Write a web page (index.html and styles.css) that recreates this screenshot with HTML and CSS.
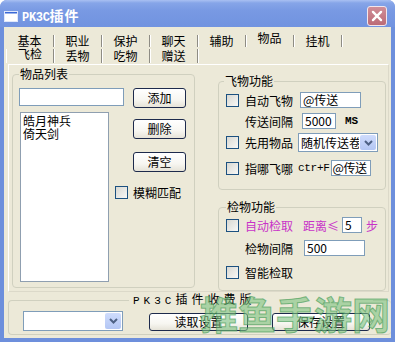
FILE: index.html
```html
<!DOCTYPE html>
<html>
<head>
    <meta charset="utf-8">
    <title>PK3C插件</title>
    <link rel="stylesheet" href="styles.css">
</head>
<body>
    <div class="window">
        <div class="titlebar">
            <svg class="app-icon" width="14" height="11" viewBox="0 0 14 11">
                <rect x="0.5" y="0.5" width="13" height="10" fill="#fff" stroke="#dfe7fb"/>
                <rect x="1" y="1" width="12" height="1.5" fill="#3a68d6"/>
            </svg>
            <span class="title"><span class="title-latin">PK3C</span>插件</span>
            <div class="btn-close">
                <svg width="20" height="20" viewBox="0 0 20 20">
                    <path d="M5.5 5.5 L14.5 14.5 M14.5 5.5 L5.5 14.5" stroke="#fff" stroke-width="2.6" stroke-linecap="round"/>
                </svg>
            </div>
        </div>

        <div class="client">
            <div class="tab-row row-back">
                <div class="tab">基本</div>
                <div class="tab">职业</div>
                <div class="tab">保护</div>
                <div class="tab">聊天</div>
                <div class="tab">辅助</div>
                <div class="tab active">物品</div>
                <div class="tab">挂机</div>
            </div>
            <div class="tab-row row-front">
                <div class="tab active">飞检</div>
                <div class="tab">丢物</div>
                <div class="tab">吃物</div>
                <div class="tab">赠送</div>
            </div>

            <div class="panel">
                <fieldset class="group group-list">
                    <legend>物品列表</legend>
                    <div class="list-top">
                        <div class="text-input item-input"></div>
                        <div class="btn btn-small">添加</div>
                    </div>
                    <div class="list-body">
                        <div class="listbox">
                            <div>皓月神兵</div>
                            <div>倚天剑</div>
                        </div>
                        <div class="list-side">
                            <div class="btn btn-small btn-first">删除</div>
                            <div class="btn btn-small btn-next">清空</div>
                            <div class="check-row">
                                <span class="check"></span>
                                <span class="check-label">模糊匹配</span>
                            </div>
                        </div>
                    </div>
                </fieldset>

                <div class="right-col">
                    <fieldset class="group group-fly">
                        <legend>飞物功能</legend>
                        <div class="row">
                            <span class="check"></span>
                            <span class="label">自动飞物</span>
                            <div class="text-input fly-target">@传送</div>
                        </div>
                        <div class="row row-gap5">
                            <span class="label indent">传送间隔</span>
                            <div class="text-input fly-interval">5000</div>
                            <span class="mono ms">MS</span>
                        </div>
                        <div class="row row-combo">
                            <span class="check"></span>
                            <span class="label">先用物品</span>
                            <div class="combo item-combo">
                                <span class="combo-text">随机传送卷</span>
                                <span class="combo-btn">
                                    <svg width="9" height="6" viewBox="0 0 9 6"><path d="M1 1 L4.5 4.5 L8 1" fill="none" stroke="#4d6185" stroke-width="2"/></svg>
                                </span>
                            </div>
                        </div>
                        <div class="row row-gap8">
                            <span class="check"></span>
                            <span class="label">指哪飞哪</span>
                            <span class="mono hotkey">ctr+F</span>
                            <div class="text-input point-target">@传送</div>
                        </div>
                    </fieldset>

                    <fieldset class="group group-pick">
                        <legend>检物功能</legend>
                        <div class="row">
                            <span class="check"></span>
                            <span class="label pink">自动检取</span>
                            <span class="pink distance">距离≤</span>
                            <div class="text-input step-input">5</div>
                            <span class="pink step">步</span>
                        </div>
                        <div class="row row-gap7">
                            <span class="label indent">检物间隔</span>
                            <div class="text-input pick-interval">500</div>
                        </div>
                        <div class="row row-gap8">
                            <span class="check"></span>
                            <span class="label">智能检取</span>
                        </div>
                    </fieldset>
                </div>
            </div>

            <fieldset class="group group-bottom">
                <legend><span class="legend-latin">PK3C</span>插件收费版</legend>
                <div class="bottom-row">
                    <div class="combo profile-combo">
                        <span class="combo-text"></span>
                        <span class="combo-btn">
                            <svg width="9" height="6" viewBox="0 0 9 6"><path d="M1 1 L4.5 4.5 L8 1" fill="none" stroke="#4d6185" stroke-width="2"/></svg>
                        </span>
                    </div>
                    <div class="btn btn-wide btn-load">读取设置</div>
                    <div class="btn btn-wide btn-save">保存设置</div>
                </div>
            </fieldset>
        </div>

        <div class="watermark">推鱼手游网</div>
    </div>
</body>
</html>
```

FILE: styles.css
```css
* {
    box-sizing: border-box;
}

body {
    margin: 0;
    background-color: #fff;
    font-family: "Noto Sans CJK SC", "Liberation Sans", sans-serif;
    font-size: 12px;
    color: #000;
}

.window {
    position: relative;
    width: 395px;
    height: 342px;
    display: flex;
    flex-direction: column;
    background-color: #6d8fdc;
    border-radius: 7px 7px 0 0;
    overflow: hidden;
}

/* title bar */

.titlebar {
    height: 27px;
    display: flex;
    align-items: center;
    padding: 5px 8px 0 4px;
    background: linear-gradient(to bottom, #a9c0f2 0, #86a5e8 3px, #7899e3 40%, #7193e0 100%);
}

.app-icon {
    display: block;
}

.title {
    flex: 1;
    margin-left: 4px;
    color: #fff;
    font-weight: bold;
    font-size: 14px;
    line-height: 16px;
    letter-spacing: 1px;
}

.title-latin {
    font-family: "Liberation Mono", monospace;
    font-size: 12px;
    letter-spacing: -0.3px;
}

.btn-close {
    width: 20px;
    height: 20px;
    border: 1px solid #f2e6ec;
    border-radius: 3px;
    background: linear-gradient(to bottom, #d08e98, #bb6b77);
    display: flex;
    align-items: center;
    justify-content: center;
}

.btn-close svg {
    display: block;
}

/* client area */

.client {
    flex: 1;
    margin: 0 4px 4px;
    padding-top: 3px;
    background-color: #ece9d8;
    overflow: hidden;
}

.tab-row {
    display: flex;
    height: 17px;
    padding-left: 2px;
}

.tab {
    width: 48px;
    text-align: center;
    border-right: 1px solid #8e8c84;
    box-shadow: 1px 0 0 #fff;
}

.row-back .tab {
    height: 12px;
    margin-top: 5px;
    line-height: 12px;
}

.row-front .tab {
    height: 14px;
    margin-top: 2px;
    line-height: 14px;
}

.row-back .tab.active {
    line-height: 6px;
}

.row-front .tab.active {
    line-height: 9px;
    border-left: 1px solid #fff;
}

.panel {
    height: 228px;
    margin: 0 2px 0 4px;
    padding: 3px 0 0 3px;
    display: flex;
    align-items: flex-start;
    border-top: 1px solid #fff;
    border-left: 1px solid #fff;
    border-right: 1px solid #dcd9c9;
    border-bottom: 1px solid #dcd9c9;
}

/* group boxes */

.group {
    margin: 0;
    min-width: 0;
    border: 1px solid #d0d0bf;
    border-radius: 4px;
}

.group legend {
    padding: 0 1px;
    line-height: 12px;
    font-size: 12px;
}

.group-list {
    width: 183px;
    height: 220px;
    padding: 8px 0 0 6px;
}

.right-col {
    width: 168px;
    margin: 7px 0 0 23px;
}

.group-fly {
    height: 115px;
    padding: 5px 0 0 7px;
}

.group-fly legend {
    margin-left: -2px;
}

.group-pick {
    height: 90px;
    margin-top: 11px;
    padding: 4px 0 0 7px;
}

.group-bottom {
    height: 42px;
    margin: 1px 0 0 4px;
    padding: 4px 0 0 14px;
    border-right: none;
}

.group-bottom legend {
    margin-left: 106px;
    padding: 0 118px 0 4px;
    white-space: nowrap;
    letter-spacing: 4px;
}

.legend-latin {
    font-family: "Liberation Mono", monospace;
    font-size: 11px;
}

/* controls */

.text-input {
    height: 16px;
    padding-left: 2px;
    border: 1px solid #7f9db9;
    background-color: #fff;
    line-height: 14px;
    white-space: nowrap;
    overflow: hidden;
}

.btn {
    border: 1px solid #1d2a4c;
    border-radius: 3px;
    background: linear-gradient(to bottom, #fff 0, #f7f6f1 60%, #e6e3d8 100%);
    text-align: center;
}

.btn-small {
    width: 53px;
    height: 20px;
    line-height: 18px;
}

.btn-wide {
    height: 18px;
    margin-top: 2px;
    line-height: 16px;
}

.check {
    display: block;
    flex: none;
    width: 13px;
    height: 13px;
    border: 1px solid #1c5180;
    background: linear-gradient(135deg, #d8d8d2, #f8f8f6);
}

.combo {
    display: flex;
    border: 1px solid #7f9db9;
    background-color: #fff;
}

.combo-text {
    flex: 1;
    padding-left: 2px;
    overflow: hidden;
    white-space: nowrap;
}

.combo-btn {
    width: 16px;
    margin: 1px;
    border-radius: 2px;
    background: linear-gradient(to bottom, #cfdcfc, #b3c6f4);
    display: flex;
    align-items: center;
    justify-content: center;
}

.mono {
    font-family: "Liberation Mono", monospace;
    font-size: 11px;
}

/* item list group */

.list-top {
    display: flex;
    align-items: flex-start;
}

.item-input {
    width: 105px;
    height: 18px;
}

.list-top .btn {
    margin-left: 9px;
}

.list-body {
    display: flex;
    margin-top: 4px;
}

.listbox {
    width: 89px;
    height: 170px;
    margin-left: 1px;
    padding: 1px 2px;
    border: 1px solid #8f9fb0;
    background-color: #fff;
    line-height: 13px;
}

.list-side {
    display: flex;
    flex-direction: column;
    align-items: flex-start;
    margin-left: 6px;
}

.list-side .btn {
    margin-left: 18px;
}

.btn-first {
    margin-top: 7px;
}

.btn-next {
    margin-top: 13px;
}

.check-row {
    display: flex;
    align-items: center;
    margin-top: 12px;
}

.check-label {
    margin-left: 5px;
}

/* right groups */

.row {
    display: flex;
    align-items: center;
    height: 16px;
}

.row-gap5 {
    margin-top: 5px;
}

.row-gap7 {
    margin-top: 7px;
}

.row-gap8 {
    margin-top: 8px;
}

.row-combo {
    height: 19px;
    margin-top: 4px;
}

.label {
    margin-left: 6px;
    white-space: nowrap;
}

.label.indent {
    margin-left: 19px;
}

.fly-target {
    width: 61px;
    margin-left: 7px;
}

.fly-interval {
    width: 34px;
    margin-left: 9px;
}

.ms {
    margin-left: 9px;
    font-weight: bold;
}

.item-combo {
    width: 80px;
    height: 19px;
    margin-left: 5px;
    line-height: 17px;
}

.hotkey {
    margin-left: 5px;
    letter-spacing: -0.3px;
}

.point-target {
    width: 40px;
    margin-left: 1px;
    padding-left: 1px;
    letter-spacing: -0.5px;
}

.pink {
    color: #c832c8;
}

.distance {
    margin-left: 10px;
}

.step-input {
    width: 20px;
    margin-left: 3px;
}

.step {
    margin-left: 4px;
}

.pick-interval {
    width: 61px;
    margin-left: 11px;
}

/* bottom bar */

.bottom-row {
    display: flex;
    align-items: flex-start;
}

.profile-combo {
    width: 100px;
    height: 20px;
}

.btn-load {
    width: 99px;
    margin-left: 26px;
}

.btn-save {
    width: 98px;
    margin-left: 24px;
}

.watermark {
    position: absolute;
    left: 200px;
    top: 294px;
    font-size: 38px;
    line-height: 1;
    font-weight: bold;
    color: rgba(125, 195, 130, 0.6);
    -webkit-text-stroke: 1px rgba(60, 150, 80, 0.6);
    white-space: nowrap;
}
```
